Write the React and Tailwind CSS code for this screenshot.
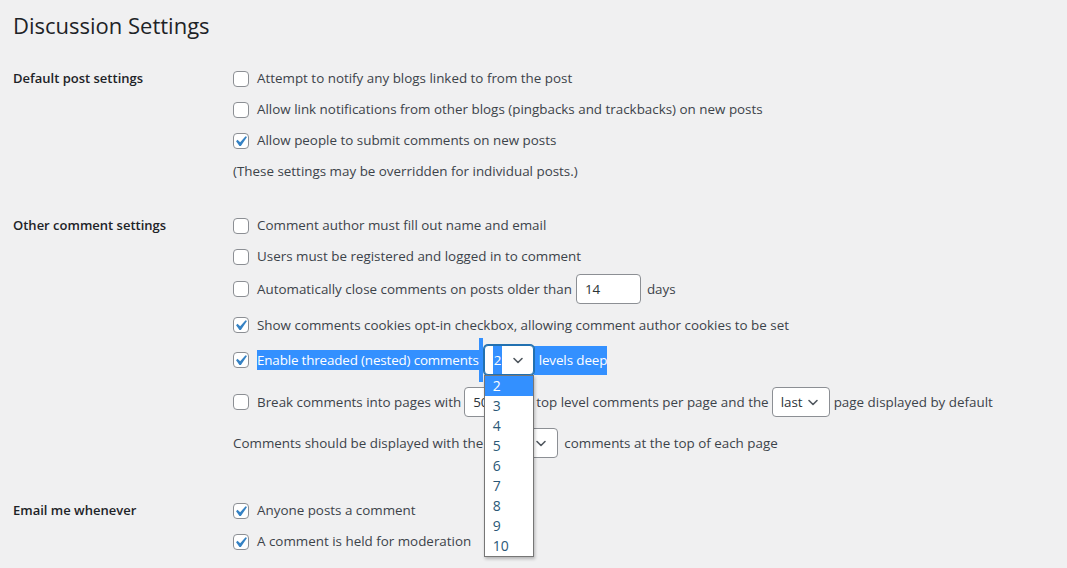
import React from "react";

const FONT = { fontFamily: '"Open Sans", "Noto Sans", sans-serif' };

/* ================= PIECES ================= */
const Check = ({ checked }) => (
  <span className="relative inline-block w-4 h-4 shrink-0 rounded-[4px] border border-[#8c8f94] bg-white">
    {checked && (
      <svg className="absolute -top-[3px] -left-[4px] w-[21px] h-[21px]" viewBox="0 0 20 20">
        <path fill="#3582c4" d="M14.83 4.89l1.34.94-5.81 8.38H9.02L5.78 9.67l1.34-1.25 2.57 2.4z" />
      </svg>
    )}
  </span>
);

const Chevron = () => (
  <svg className="w-4 h-4" viewBox="0 0 16 16" fill="none">
    <path d="M4 6.5l4 4 4-4" stroke="#50575e" strokeWidth="1.6" strokeLinecap="round" strokeLinejoin="round" />
  </svg>
);

const Select = ({ value, width, focused }) => (
  <span
    className={`inline-flex items-center justify-between h-[30px] shrink-0 rounded-[4px] bg-white pl-2 pr-2 text-[#2c3338] ${
      focused ? "border border-[#2271b1] shadow-[0_0_0_1px_#2271b1]" : "border border-[#8c8f94]"
    } ${width}`}
  >
    <span>{value}</span>
    <Chevron />
  </span>
);

const NumberInput = ({ value, width }) => (
  <span className={`inline-flex items-center h-[30px] shrink-0 rounded-[4px] border border-[#8c8f94] bg-white px-2 text-[#2c3338] ${width}`}>
    {value}
  </span>
);

const Row = ({ h, children }) => (
  <div className={`flex items-center ${h}`}>{children}</div>
);

const CheckRow = ({ checked, h = "h-[31px]", children }) => (
  <Row h={h}>
    <Check checked={checked} />
    <span className="ml-2 flex items-center">{children}</span>
  </Row>
);

const Section = ({ label, children }) => (
  <div className="flex">
    <div className="w-[220px] shrink-0 h-[31px] flex items-center text-[13px] font-semibold text-[#1d2327]">{label}</div>
    <div className="flex-1">{children}</div>
  </div>
);

/* ================= APP ================= */
export default function App() {
  const levels = ["2", "3", "4", "5", "6", "7", "8", "9", "10"];

  return (
    <div className="min-h-screen w-[1067px] h-[568px] overflow-hidden bg-[#f0f0f1] text-[13.4px] text-[#3c434a] pl-[13px]" style={FONT}>
      <h1 className="h-[50px] flex items-center text-[22px] font-normal text-[#1d2327]">Discussion Settings</h1>

      <div className="mt-[13px]">
        <Section label="Default post settings">
          <CheckRow>Attempt to notify any blogs linked to from the post</CheckRow>
          <CheckRow>Allow link notifications from other blogs (pingbacks and trackbacks) on new posts</CheckRow>
          <CheckRow checked>Allow people to submit comments on new posts</CheckRow>
          <Row h="h-[31px]">(These settings may be overridden for individual posts.)</Row>
        </Section>
      </div>

      <div className="mt-[23px]">
        <Section label="Other comment settings">
          <CheckRow>Comment author must fill out name and email</CheckRow>
          <CheckRow>Users must be registered and logged in to comment</CheckRow>
          <CheckRow h="h-[34px]">
            Automatically close comments on posts older than
            <span className="ml-[4px]"><NumberInput value="14" width="w-[65px]" /></span>
            <span className="ml-[6px]">days</span>
          </CheckRow>
          <CheckRow checked h="h-[38px]">
            Show comments cookies opt-in checkbox, allowing comment author cookies to be set
          </CheckRow>

          {/* threaded comments row, with text selected and native dropdown open */}
          <Row h="h-[32px]">
            <Check checked />
            <span className="ml-2 flex items-center">
              <span className="h-[20px] leading-[20px] tracking-[-0.15px] bg-[#3390ff] text-white">
                Enable threaded (nested) comments
              </span>
              <span className="w-[4px] h-[44px] bg-[#3390ff]" />
              <span className="relative ml-[1px]">
                <span className="inline-flex items-center justify-between w-[50px] h-[30px] rounded-[4px] bg-white border border-[#2271b1] shadow-[0_0_0_1px_#2271b1] pl-[8px] pr-[7px]">
                  <span className="h-[28px] leading-[28px] px-[1px] bg-[#3390ff] text-white">2</span>
                  <Chevron />
                </span>
                <span className="absolute left-0 top-[30px] z-10 w-[50px] flex flex-col bg-white border border-[#767676] shadow-[1px_2px_3px_rgba(0,0,0,0.25)]">
                  {levels.map((n, i) => (
                    <span
                      key={n}
                      className={`h-[20px] leading-[20px] pl-[8px] text-[14px] ${
                        i === 0 ? "bg-[#3390ff] text-white" : "text-[#2b5877]"
                      }`}
                    >
                      {n}
                    </span>
                  ))}
                </span>
              </span>
              <span className="h-[29px] leading-[29px] pl-[5px] tracking-[-0.1px] bg-[#3390ff] text-white">levels deep</span>
            </span>
          </Row>

          <CheckRow h="h-[52px]">
            Break comments into pages with
            <span className="ml-[3px]"><NumberInput value="50" width="w-[65px]" /></span>
            <span className="ml-[7px]">top level comments per page and the</span>
            <span className="ml-[3px]"><Select value="last" width="w-[58px]" /></span>
            <span className="ml-[4px]">page displayed by default</span>
          </CheckRow>

          <Row h="h-[30px]">
            Comments should be displayed with the
            <span className="ml-[3px]"><Select value="" width="w-[72px]" /></span>
            <span className="ml-[6px]">comments at the top of each page</span>
          </Row>
        </Section>
      </div>

      <div className="mt-[37px]">
        <Section label="Email me whenever">
          <CheckRow checked>Anyone posts a comment</CheckRow>
          <CheckRow checked>A comment is held for moderation</CheckRow>
        </Section>
      </div>
    </div>
  );
}
